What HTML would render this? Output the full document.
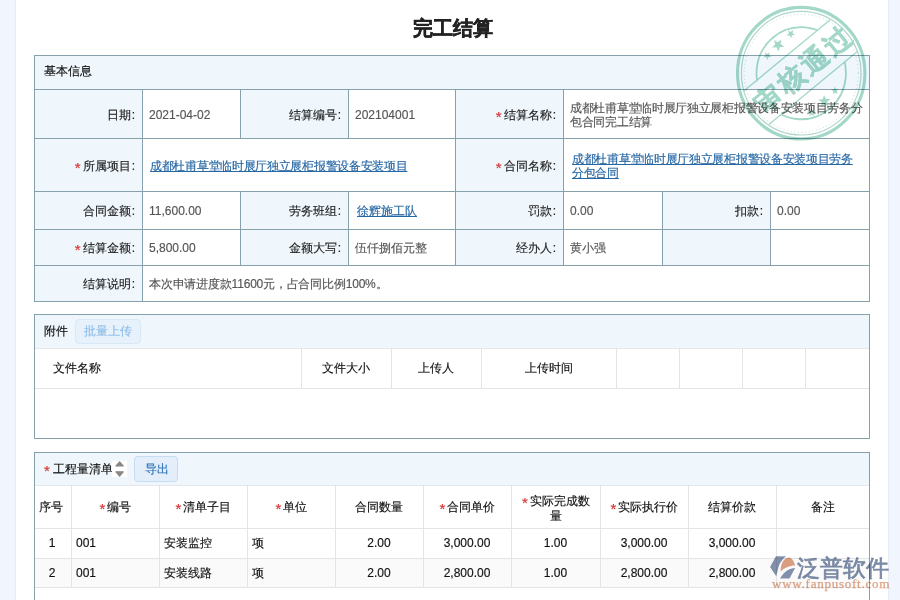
<!DOCTYPE html>
<html><head><meta charset="utf-8">
<style>
*{margin:0;padding:0;box-sizing:border-box}
html,body{width:900px;height:600px;overflow:hidden;background:#fff;font-family:"Liberation Sans",sans-serif;font-size:12px;color:#333;-webkit-text-stroke:0.15px}
.strip{position:absolute;top:0;bottom:0;background:#f1f5fd}
.a{position:absolute}
.title{-webkit-text-stroke:0.5px;position:absolute;left:0;width:906px;top:14px;text-align:center;font-size:20px;font-weight:bold;color:#222;line-height:28px}
.hl{position:absolute;height:1px;background:#86a0ac}
.vl{position:absolute;width:1px;background:#86a0ac}
.lb{position:absolute;background:#eff7fd}
.lab{position:absolute;text-align:right;color:#222;white-space:nowrap;line-height:16px}
.val{position:absolute;color:#555;white-space:nowrap;line-height:16px}
.req{-webkit-text-stroke:0.2px;color:#d83535;margin-right:3px;position:relative;top:3px;left:1px;font-size:15px;line-height:10px}
.c{font-style:normal;position:relative;left:1px}
.lnk{color:#2667a4;text-decoration:underline}
</style></head><body>
<div class="strip" style="left:0;width:16px;border-right:1px solid #e7ebf4"></div>
<div class="strip" style="left:888px;width:12px;border-left:1px solid #e7ebf3"></div>
<div class="title">完工结算</div>

<!-- basic info table -->
<div class="lb" style="left:34px;top:55px;width:836px;height:34px"></div>
<div class="lb" style="left:34px;top:89px;width:108px;height:212px"></div>
<div class="lb" style="left:240px;top:89px;width:108px;height:49px"></div>
<div class="lb" style="left:240px;top:191px;width:108px;height:74px"></div>
<div class="lb" style="left:455px;top:89px;width:108px;height:176px"></div>
<div class="lb" style="left:662px;top:191px;width:108px;height:74px"></div>

<div class="hl" style="left:34px;top:55px;width:836px"></div>
<div class="hl" style="left:34px;top:89px;width:836px"></div>
<div class="hl" style="left:34px;top:138px;width:836px"></div>
<div class="hl" style="left:34px;top:191px;width:836px"></div>
<div class="hl" style="left:34px;top:229px;width:836px"></div>
<div class="hl" style="left:34px;top:265px;width:836px"></div>
<div class="hl" style="left:34px;top:301px;width:836px"></div>
<div class="vl" style="left:34px;top:55px;height:247px"></div>
<div class="vl" style="left:869px;top:55px;height:247px"></div>
<div class="vl" style="left:142px;top:89px;height:212px"></div>
<div class="vl" style="left:240px;top:89px;height:49px"></div>
<div class="vl" style="left:348px;top:89px;height:49px"></div>
<div class="vl" style="left:455px;top:89px;height:102px"></div>
<div class="vl" style="left:563px;top:89px;height:102px"></div>
<div class="vl" style="left:240px;top:191px;height:74px"></div>
<div class="vl" style="left:348px;top:191px;height:74px"></div>
<div class="vl" style="left:455px;top:191px;height:74px"></div>
<div class="vl" style="left:563px;top:191px;height:74px"></div>
<div class="vl" style="left:662px;top:191px;height:74px"></div>
<div class="vl" style="left:770px;top:191px;height:74px"></div>

<div class="a" style="left:44px;top:63px;line-height:16px;color:#111">基本信息</div>

<div class="lab" style="right:766px;top:107px">日期<i class="c">:</i></div>
<div class="val" style="left:149px;top:107px">2021-04-02</div>
<div class="lab" style="right:560px;top:107px">结算编号<i class="c">:</i></div>
<div class="val" style="left:355px;top:107px">202104001</div>
<div class="lab" style="right:345px;top:107px"><span class="req">*</span>结算名称<i class="c">:</i></div>
<div class="val" style="left:570px;top:101px;white-space:normal;width:302px;line-height:14px;letter-spacing:-0.3px">成都杜甫草堂临时展厅独立展柜报警设备安装项目劳务分包合同完工结算</div>

<div class="lab" style="right:766px;top:158px"><span class="req">*</span>所属项目<i class="c">:</i></div>
<div class="val lnk" style="left:150px;top:158px;letter-spacing:-0.3px">成都杜甫草堂临时展厅独立展柜报警设备安装项目</div>
<div class="lab" style="right:345px;top:158px"><span class="req">*</span>合同名称<i class="c">:</i></div>
<div class="val lnk" style="left:572px;top:152px;white-space:normal;width:286px;line-height:14px;letter-spacing:-0.3px">成都杜甫草堂临时展厅独立展柜报警设备安装项目劳务分包合同</div>

<div class="lab" style="right:766px;top:203px">合同金额<i class="c">:</i></div>
<div class="val" style="left:149px;top:203px">11,600.00</div>
<div class="lab" style="right:560px;top:203px">劳务班组<i class="c">:</i></div>
<div class="val lnk" style="left:357px;top:203px">徐辉施工队</div>
<div class="lab" style="right:345px;top:203px">罚款<i class="c">:</i></div>
<div class="val" style="left:570px;top:203px">0.00</div>
<div class="lab" style="right:138px;top:203px">扣款<i class="c">:</i></div>
<div class="val" style="left:777px;top:203px">0.00</div>

<div class="lab" style="right:766px;top:240px"><span class="req">*</span>结算金额<i class="c">:</i></div>
<div class="val" style="left:149px;top:240px">5,800.00</div>
<div class="lab" style="right:560px;top:240px">金额大写<i class="c">:</i></div>
<div class="val" style="left:355px;top:240px">伍仟捌佰元整</div>
<div class="lab" style="right:345px;top:240px">经办人<i class="c">:</i></div>
<div class="val" style="left:570px;top:240px">黄小强</div>

<div class="lab" style="right:766px;top:276px">结算说明<i class="c">:</i></div>
<div class="val" style="left:149px;top:276px;letter-spacing:-0.2px">本次申请进度款11600元，占合同比例100%。</div>


<!-- attachments -->
<div class="a" style="left:34px;top:314px;width:836px;height:125px;border:1px solid #86a0ac;background:#fff"></div>
<div class="a" style="left:35px;top:315px;width:834px;height:33px;background:#eff7fd"></div>
<div class="hl" style="left:35px;top:348px;width:834px;background:#e4e8ec"></div>
<div class="hl" style="left:35px;top:388px;width:834px;background:#e4e4e4"></div>
<div class="vl" style="left:301px;top:348px;height:40px;background:#e4e4e4"></div>
<div class="vl" style="left:391px;top:348px;height:40px;background:#e4e4e4"></div>
<div class="vl" style="left:481px;top:348px;height:40px;background:#e4e4e4"></div>
<div class="vl" style="left:616px;top:348px;height:40px;background:#e4e4e4"></div>
<div class="vl" style="left:679px;top:348px;height:40px;background:#e4e4e4"></div>
<div class="vl" style="left:742px;top:348px;height:40px;background:#e4e4e4"></div>
<div class="vl" style="left:805px;top:348px;height:40px;background:#e4e4e4"></div>
<div class="a" style="left:44px;top:323px;line-height:16px;color:#111">附件</div>
<div class="a" style="left:75px;top:319px;width:66px;height:25px;border:1px solid #d9e8f5;background:#e6f1fb;border-radius:4px;color:#8fbde6;text-align:center;line-height:23px">批量上传</div>
<div class="a" style="left:53px;top:360px;line-height:16px;color:#111">文件名称</div>
<div class="a" style="left:301px;width:90px;top:360px;line-height:16px;color:#111;text-align:center">文件大小</div>
<div class="a" style="left:391px;width:90px;top:360px;line-height:16px;color:#111;text-align:center">上传人</div>
<div class="a" style="left:481px;width:135px;top:360px;line-height:16px;color:#111;text-align:center">上传时间</div>

<!-- bill of quantities -->
<div class="a" style="left:34px;top:452px;width:836px;height:160px;border:1px solid #86a0ac;background:#fff"></div>
<div class="a" style="left:35px;top:453px;width:834px;height:32px;background:#eff7fd"></div>
<div class="a" style="left:35px;top:558px;width:834px;height:29px;background:#fafafa"></div>
<div class="hl" style="left:35px;top:485px;width:834px;background:#e4e8ec"></div>
<div class="hl" style="left:35px;top:528px;width:834px;background:#e4e4e4"></div>
<div class="hl" style="left:35px;top:558px;width:834px;background:#e4e4e4"></div>
<div class="hl" style="left:35px;top:587px;width:834px;background:#e4e4e4"></div>
<div class="vl" style="left:71px;top:485px;height:102px;background:#e4e4e4"></div>
<div class="vl" style="left:159px;top:485px;height:102px;background:#e4e4e4"></div>
<div class="vl" style="left:247px;top:485px;height:102px;background:#e4e4e4"></div>
<div class="vl" style="left:335px;top:485px;height:102px;background:#e4e4e4"></div>
<div class="vl" style="left:423px;top:485px;height:102px;background:#e4e4e4"></div>
<div class="vl" style="left:511px;top:485px;height:102px;background:#e4e4e4"></div>
<div class="vl" style="left:600px;top:485px;height:102px;background:#e4e4e4"></div>
<div class="vl" style="left:688px;top:485px;height:102px;background:#e4e4e4"></div>
<div class="vl" style="left:776px;top:485px;height:102px;background:#e4e4e4"></div>
<div class="a" style="left:43px;top:461px;line-height:16px;color:#111"><span class="req" style="margin-right:4px">*</span>工程量清单</div>
<div class="a" style="left:112px;top:461px;width:15px;height:16px;background:#fff"></div>
<svg class="a" style="left:0;top:0" width="900" height="600"><path d="M116,466 L119.6,461.8 L123.2,466Z M116,471.8 L123.2,471.8 L119.6,476.2Z" fill="#8a8784" stroke="#8a8784" stroke-width="1.2" stroke-linejoin="round"/></svg>
<div class="a" style="left:134px;top:456px;width:44px;height:26px;border:1px solid #c6dcf0;background:#e3eefa;border-radius:4px;color:#2a70b8;text-align:center;line-height:24px;padding-left:1px">导出</div>
<div class="a" style="left:33px;width:36px;top:499px;line-height:16px;color:#111;text-align:center">序号</div>
<div class="a" style="left:71px;width:88px;top:499px;line-height:16px;color:#111;text-align:center"><span class="req">*</span>编号</div>
<div class="a" style="left:159px;width:88px;top:499px;line-height:16px;color:#111;text-align:center"><span class="req">*</span>清单子目</div>
<div class="a" style="left:247px;width:88px;top:499px;line-height:16px;color:#111;text-align:center"><span class="req">*</span>单位</div>
<div class="a" style="left:335px;width:88px;top:499px;line-height:16px;color:#111;text-align:center">合同数量</div>
<div class="a" style="left:423px;width:88px;top:499px;line-height:16px;color:#111;text-align:center"><span class="req">*</span>合同单价</div>
<div class="a" style="left:511px;width:89px;top:494px;line-height:15px;color:#111;text-align:center"><span class="req">*</span>实际完成数<br>量</div>
<div class="a" style="left:600px;width:88px;top:499px;line-height:16px;color:#111;text-align:center"><span class="req">*</span>实际执行价</div>
<div class="a" style="left:688px;width:88px;top:499px;line-height:16px;color:#111;text-align:center">结算价款</div>
<div class="a" style="left:776px;width:93px;top:499px;line-height:16px;color:#111;text-align:center">备注</div>
<div class="a" style="left:34px;width:36px;top:535px;line-height:16px;color:#111;text-align:center">1</div>
<div class="a" style="left:76px;top:535px;line-height:16px;color:#111">001</div>
<div class="a" style="left:164px;top:535px;line-height:16px;color:#111">安装监控</div>
<div class="a" style="left:252px;top:535px;line-height:16px;color:#111">项</div>
<div class="a" style="left:335px;width:88px;top:535px;line-height:16px;color:#111;text-align:center">2.00</div>
<div class="a" style="left:423px;width:88px;top:535px;line-height:16px;color:#111;text-align:center">3,000.00</div>
<div class="a" style="left:511px;width:89px;top:535px;line-height:16px;color:#111;text-align:center">1.00</div>
<div class="a" style="left:600px;width:88px;top:535px;line-height:16px;color:#111;text-align:center">3,000.00</div>
<div class="a" style="left:688px;width:88px;top:535px;line-height:16px;color:#111;text-align:center">3,000.00</div>
<div class="a" style="left:34px;width:36px;top:565px;line-height:16px;color:#111;text-align:center">2</div>
<div class="a" style="left:76px;top:565px;line-height:16px;color:#111">001</div>
<div class="a" style="left:164px;top:565px;line-height:16px;color:#111">安装线路</div>
<div class="a" style="left:252px;top:565px;line-height:16px;color:#111">项</div>
<div class="a" style="left:335px;width:88px;top:565px;line-height:16px;color:#111;text-align:center">2.00</div>
<div class="a" style="left:423px;width:88px;top:565px;line-height:16px;color:#111;text-align:center">2,800.00</div>
<div class="a" style="left:511px;width:89px;top:565px;line-height:16px;color:#111;text-align:center">1.00</div>
<div class="a" style="left:600px;width:88px;top:565px;line-height:16px;color:#111;text-align:center">2,800.00</div>
<div class="a" style="left:688px;width:88px;top:565px;line-height:16px;color:#111;text-align:center">2,800.00</div>

<svg class="a" style="left:0;top:0;mix-blend-mode:multiply" width="900" height="600">
<defs><clipPath id="cb"><path d="M-80,-80 H80 V-22.8 H-80Z M-80,19 H80 V80 H-80Z"/></clipPath></defs>
<g transform="translate(801.2,73.2)" fill="none" stroke="#a3d8c9">
<g transform="scale(0.968,1)">
<circle r="65.8" stroke-width="3.2"/>
<circle r="61.8" stroke-width="1.2" stroke="#b0d6cc"/>
<circle r="59" stroke-width="1" stroke-dasharray="0.8 3" stroke="#a9cfc6"/>
</g>
<g transform="rotate(-39.5)">
<g transform="rotate(39.5) scale(0.972,1) rotate(-39.5)"><circle r="46" stroke-width="1.8" clip-path="url(#cb)"/></g>
<line x1="-56" y1="-22.8" x2="56" y2="-22.8" stroke-width="1.3"/>
<line x1="-57.5" y1="19" x2="57.5" y2="19" stroke-width="1.3"/>
<g fill="#a3d8c9" stroke="none"><polygon points="-15.00,-39.20 -13.96,-36.43 -11.01,-36.30 -13.32,-34.45 -12.53,-31.60 -15.00,-33.24 -17.47,-31.60 -16.68,-34.45 -18.99,-36.30 -16.04,-36.43"/><polygon points="15.00,39.20 13.96,36.43 11.01,36.30 13.32,34.45 12.53,31.60 15.00,33.24 17.47,31.60 16.68,34.45 18.99,36.30 16.04,36.43"/><polygon points="0.00,-43.00 1.60,-38.71 6.18,-38.51 2.60,-35.66 3.82,-31.24 0.00,-33.77 -3.82,-31.24 -2.60,-35.66 -6.18,-38.51 -1.60,-38.71"/><polygon points="0.00,43.00 -1.60,38.71 -6.18,38.51 -2.60,35.66 -3.82,31.24 -0.00,33.77 3.82,31.24 2.60,35.66 6.18,38.51 1.60,38.71"/><polygon points="17.00,-41.50 18.11,-38.53 21.28,-38.39 18.80,-36.42 19.65,-33.36 17.00,-35.11 14.35,-33.36 15.20,-36.42 12.72,-38.39 15.89,-38.53"/><polygon points="-17.00,41.50 -18.11,38.53 -21.28,38.39 -18.80,36.42 -19.65,33.36 -17.00,35.11 -14.35,33.36 -15.20,36.42 -12.72,38.39 -15.89,38.53"/></g>
<text x="4.7" y="8" text-anchor="middle" fill="#a3d8c9" stroke="#a3d8c9" stroke-width="0.4" font-size="27" font-weight="bold" letter-spacing="3" font-family="Liberation Sans, sans-serif">审核通过</text>
</g></g></svg>

<svg class="a" style="left:0;top:0;mix-blend-mode:multiply" width="900" height="600">
<path d="M775.9,556.3 L786,556.3 Q779,562 777.8,570 L776.2,576.3 L770.1,567 Z" fill="#8592ae"/>
<path d="M780.6,571.7 C780.5,562 785,557.4 789,557.4 C792,557.4 794.5,562 795.1,565.6 C790,565.5 784,568 780.6,571.7 Z" fill="#dfa082"/>
<path d="M780.1,578.4 L789.5,578.4 L795.1,567.9 C790,568 784,571 780.1,578.4 Z" fill="#8592ae"/>
<text x="797" y="576" font-size="23" fill="#7b8aa6" stroke="#7b8aa6" stroke-width="0.7" font-family="Liberation Sans, sans-serif">泛普软件</text>
<text x="772" y="588" font-size="13" letter-spacing="0.75" fill="#dea486" stroke="#dea486" stroke-width="0.25" font-family="Liberation Serif, serif">www.fanpusoft.com</text>
</svg>
</body></html>
